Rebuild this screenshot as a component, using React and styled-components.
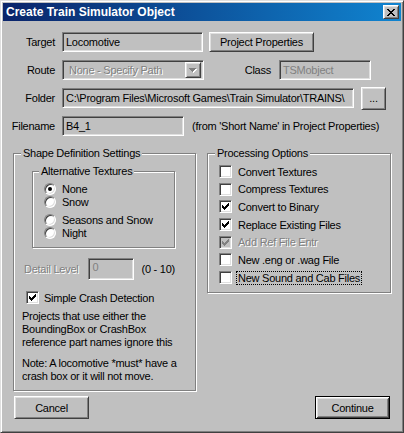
import React from 'react';
import styled, { createGlobalStyle, css } from 'styled-components';

const GlobalStyle = createGlobalStyle`
  html, body { margin: 0; padding: 0; background: #c0c0c0; }
  body {
    font-family: "Liberation Sans", Arial, sans-serif;
    font-size: 11px;
    letter-spacing: -0.25px;
    color: #000;
  }
  * { box-sizing: border-box; }
`;

const raised = css`
  border: 1px solid;
  border-color: #fff #404040 #404040 #fff;
  box-shadow: inset 1px 1px 0 #dfdfdf, inset -1px -1px 0 #808080;
`;

const sunken = css`
  border: 1px solid;
  border-color: #808080 #fff #fff #808080;
  box-shadow: inset 1px 1px 0 #404040, inset -1px -1px 0 #dfdfdf;
`;

const disabledText = css`
  color: #808080;
  text-shadow: 1px 1px 0 #fff;
`;

const Window = styled.div`
  width: 404px;
  height: 433px;
  background: #c0c0c0;
  border: 1px solid;
  border-color: #dfdfdf #404040 #404040 #dfdfdf;
  box-shadow: inset 1px 1px 0 #fff, inset -1px -1px 0 #808080;
  padding: 2px;
  display: flex;
  flex-direction: column;
`;

const TitleBar = styled.div`
  height: 18px;
  flex: none;
  background: linear-gradient(to right, #0a246a, #1084d0);
  display: flex;
  align-items: center;
  justify-content: space-between;
  padding: 0 2px 0 3px;
`;

const TitleText = styled.span`
  color: #fff;
  font-weight: bold;
  font-size: 12px;
  letter-spacing: 0;
`;

const CloseButton = styled.div`
  width: 16px;
  height: 14px;
  background: #c0c0c0;
  ${raised};
  display: flex;
  align-items: center;
  justify-content: center;
`;

const Body = styled.div`
  display: flex;
  flex-direction: column;
  padding: 11px 10px 0 10px;
`;

const Form = styled.div`
  display: grid;
  grid-template-columns: 42px 1fr;
  grid-auto-rows: 20px;
  column-gap: 7px;
  row-gap: 8px;
`;

const Label = styled.span`
  display: flex;
  align-items: center;
  justify-content: flex-end;
  white-space: nowrap;
  width: ${p => (p.$w ? `${p.$w}px` : 'auto')};
  margin-right: ${p => p.$mr || 0}px;
`;

const Line = styled.div`
  display: flex;
  align-items: center;
  gap: ${p => p.$gap || 0}px;
`;

const Field = styled.div`
  width: ${p => p.$w}px;
  height: ${p => p.$h || 20}px;
  flex: none;
  ${sunken};
  background: #c0c0c0;
  padding: ${p => (p.$top ? '2px 3px 0' : '0 3px')};
  display: flex;
  align-items: ${p => (p.$top ? 'flex-start' : 'center')};
  white-space: nowrap;
  overflow: hidden;
  ${p => p.$disabled && 'color: #808080;'}
`;

const Combo = styled(Field)`
  padding: 0 2px 0 6px;
  justify-content: space-between;
`;

const ComboButton = styled.div`
  width: 16px;
  height: 16px;
  background: #c0c0c0;
  ${raised};
  display: flex;
  align-items: center;
  justify-content: center;
`;

const Button = styled.div`
  width: ${p => p.$w}px;
  height: ${p => p.$h || 23}px;
  flex: none;
  background: #c0c0c0;
  display: flex;
  align-items: center;
  justify-content: center;
  white-space: nowrap;
  ${raised};
  ${p =>
    p.$default &&
    css`
      border: 1px solid #000;
      box-shadow: inset 1px 1px 0 #fff, inset -1px -1px 0 #404040,
        inset 2px 2px 0 #dfdfdf, inset -2px -2px 0 #808080;
    `}
`;

const Hint = styled.span`
  margin-left: ${p => p.$ml || 0}px;
  white-space: nowrap;
  ${p => p.$disabled && disabledText}
`;

const Columns = styled.div`
  display: flex;
  align-items: flex-start;
  gap: 11px;
  margin-top: 11px;
`;

const Group = styled.fieldset`
  margin: ${p => p.$mt || 0}px 0 0 ${p => p.$ml || 0}px;
  padding: 0;
  min-width: 0;
  width: ${p => p.$w}px;
  height: ${p => p.$h}px;
  border: 1px solid #808080;
  box-shadow: inset 1px 1px 0 #fff, 1px 1px 0 #fff;
  display: flex;
  flex-direction: column;
`;

const Legend = styled.legend`
  margin-left: ${p => p.$ml || 7}px;
  padding: 0 2px;
  line-height: 13px;
  background: #c0c0c0;
`;

const List = styled.div`
  display: flex;
  flex-direction: column;
  gap: ${p => p.$gap || 0}px;
  padding: ${p => p.$pt || 0}px 0 0 ${p => p.$pl || 0}px;
`;

const Row = styled.div`
  display: flex;
  align-items: center;
  height: 13px;
  gap: ${p => p.$gap || 6}px;
  margin-top: ${p => p.$mt || 0}px;
  padding-left: ${p => p.$pl || 0}px;
  white-space: nowrap;
`;

const Radio = styled.span`
  width: 12px;
  height: 12px;
  flex: none;
  border-radius: 50%;
  background: #fff;
  ${sunken};
  display: inline-flex;
  align-items: center;
  justify-content: center;
  &::after {
    content: '';
    width: 4px;
    height: 4px;
    border-radius: 50%;
    background: #000;
    display: ${p => (p.$on ? 'block' : 'none')};
  }
`;

const Box = styled.span`
  width: 13px;
  height: 13px;
  flex: none;
  background: ${p => (p.$disabled ? '#c0c0c0' : '#fff')};
  ${sunken};
  display: inline-flex;
  align-items: center;
  justify-content: center;
`;

const BoxText = styled.span`
  ${p => p.$disabled && disabledText}
  ${p =>
    p.$focus &&
    css`
      outline: 1px dotted #000;
      padding: 0 1px;
      margin-left: -1px;
    `}
`;

const DetailRow = styled.div`
  display: flex;
  align-items: center;
  margin-top: 10px;
  padding-left: 10px;
`;

const Paragraph = styled.p`
  margin: ${p => p.$mt || 0}px 0 0 0;
  padding-left: 8px;
  line-height: 13px;
  white-space: nowrap;
`;

const ButtonBar = styled.div`
  display: flex;
  justify-content: space-between;
  margin-top: 5px;
  padding: 0 1px;
`;

const CloseGlyph = () => (
  <svg width="8" height="7" viewBox="0 0 8 7" shapeRendering="crispEdges">
    <path
      d="M0 0h2v1H0zM6 0h2v1H6zM1 1h2v1H1zM5 1h2v1H5zM2 2h4v1H2zM3 3h2v1H3zM2 4h4v1H2zM1 5h2v1H1zM5 5h2v1H5zM0 6h2v1H0zM6 6h2v1H6z"
      fill="#000"
    />
  </svg>
);

const Arrow = ({ color = '#000', shadow }) => (
  <svg width="8" height="5" viewBox="0 0 8 5" shapeRendering="crispEdges">
    {shadow && <path d="M1 1h7v1H1zM2 2h5v1H2zM3 3h3v1H3zM4 4h1v1H4z" fill="#fff" />}
    <path d="M0 0h7v1H0zM1 1h5v1H1zM2 2h3v1H2zM3 3h1v1H3z" fill={color} />
  </svg>
);

const Tick = ({ color = '#000' }) => (
  <svg width="7" height="7" viewBox="0 0 7 7" shapeRendering="crispEdges">
    <path
      d="M0 2h1v3H0zM1 3h1v3H1zM2 4h1v3H2zM3 3h1v3H3zM4 2h1v3H4zM5 1h1v3H5zM6 0h1v3H6z"
      fill={color}
    />
  </svg>
);

const Check = ({ checked, disabled, focus, children }) => (
  <Row>
    <Box $disabled={disabled}>{checked && <Tick color={disabled ? '#808080' : '#000'} />}</Box>
    <BoxText $disabled={disabled} $focus={focus}>{children}</BoxText>
  </Row>
);

const textures = [
  { name: 'None', on: true },
  { name: 'Snow' },
  { name: 'Seasons and Snow', mt: 5 },
  { name: 'Night' },
];

const options = [
  { name: 'Convert Textures' },
  { name: 'Compress Textures' },
  { name: 'Convert to Binary', checked: true },
  { name: 'Replace Existing Files', checked: true },
  { name: 'Add Ref File Entr', checked: true, disabled: true },
  { name: 'New .eng or .wag File' },
  { name: 'New Sound and Cab Files', focus: true },
];

export default function App() {
  return (
    <>
      <GlobalStyle />
      <Window>
        <TitleBar>
          <TitleText>Create Train Simulator Object</TitleText>
          <CloseButton>
            <CloseGlyph />
          </CloseButton>
        </TitleBar>
        <Body>
          <Form>
            <Label>Target</Label>
            <Line $gap={6}>
              <Field $w={141}>Locomotive</Field>
              <Button $w={105} $h={20}>Project Properties</Button>
            </Line>

            <Label>Route</Label>
            <Line>
              <Combo $w={142} $disabled>
                <Hint $disabled>None - Specify Path</Hint>
                <ComboButton>
                  <Arrow color="#808080" shadow />
                </ComboButton>
              </Combo>
              <Label $w={67} $mr={8}>Class</Label>
              <Field $w={92} $disabled>TSMobject</Field>
            </Line>

            <Label>Folder</Label>
            <Line $gap={7}>
              <Field $w={292}>C:\Program Files\Microsoft Games\Train Simulator\TRAINS\</Field>
              <Button $w={25} $h={23}>...</Button>
            </Line>

            <Label>Filename</Label>
            <Line>
              <Field $w={122}>B4_1</Field>
              <Hint $ml={8}>(from 'Short Name' in Project Properties)</Hint>
            </Line>
          </Form>

          <Columns>
            <Group $w={183} $h={244}>
              <Legend>Shape Definition Settings</Legend>
              <Group $w={143} $h={83} $mt={5} $ml={18}>
                <Legend $ml={6}>Alternative Textures</Legend>
                <List $pt={4} $pl={11}>
                  {textures.map(t => (
                    <Row key={t.name} $mt={t.mt}>
                      <Radio $on={t.on} />
                      <span>{t.name}</span>
                    </Row>
                  ))}
                </List>
              </Group>

              <DetailRow>
                <Label $mr={10}>
                  <Hint $disabled>Detail Level</Hint>
                </Label>
                <Field $w={46} $h={22} $disabled $top>0</Field>
                <Hint $ml={7}>(0 - 10)</Hint>
              </DetailRow>

              <List $pt={11} $pl={12}>
                <Row $gap={5}>
                  <Box>
                    <Tick />
                  </Box>
                  <span>Simple Crash Detection</span>
                </Row>
              </List>

              <Paragraph $mt={6}>
                Projects that use either the
                <br />
                BoundingBox or CrashBox
                <br />
                reference part names ignore this
              </Paragraph>
              <Paragraph $mt={8}>
                Note: A locomotive *must* have a
                <br />
                crash box or it will not move.
              </Paragraph>
            </Group>

            <Group $w={184} $h={146}>
              <Legend>Processing Options</Legend>
              <List $pt={5} $pl={11} $gap={4.7}>
                {options.map(o => (
                  <Check key={o.name} checked={o.checked} disabled={o.disabled} focus={o.focus}>
                    {o.name}
                  </Check>
                ))}
              </List>
            </Group>
          </Columns>

          <ButtonBar>
            <Button $w={75}>Cancel</Button>
            <Button $w={75} $default>Continue</Button>
          </ButtonBar>
        </Body>
      </Window>
    </>
  );
}
